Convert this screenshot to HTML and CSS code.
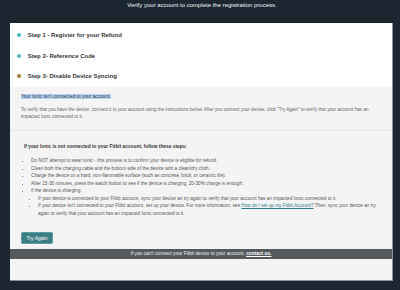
FILE: index.html
```html
<!DOCTYPE html>
<html>
<head>
<meta charset="utf-8">
<link rel="stylesheet" href="styles.css">
</head>
<body>
<div class="page">
  <div class="title">Verify your account to complete the registration process.</div>
  <div class="card">
    <div class="steps">
      <div class="step"><span class="dot teal"></span><span>Step 1 - Register for your Refund</span></div>
      <div class="step"><span class="dot teal"></span><span>Step 2- Reference Code</span></div>
      <div class="step"><span class="dot brown"></span><span>Step 3- Disable Device Syncing</span></div>
    </div>
    <div class="panel">
      <div class="intro">
        <p class="hl"><span>Your Ionic isn't connected to your account.</span></p>
        <p class="desc">To verify that you have the device, connect it to your account using the instructions below. After you connect your device, click "Try Again" to verify that your account has an impacted Ionic connected to it.</p>
      </div>
      <div class="body">
        <p class="head">If your Ionic is not connected to your Fitbit account, follow these steps:</p>
        <ul class="list">
          <li>Do NOT attempt to wear Ionic - this process is to confirm your device is eligible for refund.</li>
          <li>Clean both the charging cable and the bottom side of the device with a clean/dry cloth.</li>
          <li>Charge the device on a hard, non-flammable surface (such as concrete, brick, or ceramic tile).</li>
          <li>After 15-30 minutes, press the watch button to see if the device is charging; 20-30% charge is enough.</li>
          <li>If the device is charging:
            <ul class="sub">
              <li>If your device is connected to your Fitbit account, sync your device an try again to verify that your account has an impacted Ionic connected to it.</li>
              <li>If your device isn't connected to your Fitbit account, set up your device. For more information, see <a href="#">How do I set up my Fitbit Account?</a> Then, sync your device an try again to verify that your account has an impacted Ionic connected to it.</li>
            </ul>
          </li>
        </ul>
        <button class="btn">Try Again</button>
      </div>
      <div class="footer">If you can't connect your Fitbit device to your account, <a href="#">contact us.</a></div>
      <div class="bottom"></div>
    </div>
  </div>
</div>
</body>
</html>
```
FILE: styles.css
```css
html, body {
  margin: 0;
  padding: 0;
  background: #1b2630;
}
body {
  font-family: "Liberation Sans", Arial, sans-serif;
  width: 400px;
  height: 290px;
  overflow: hidden;
}
.page {
  padding: 0 8px 0 10px;
}
.title {
  color: #f2f4f5;
  font-size: 6px;
  text-align: center;
  height: 23px;
  line-height: 10px;
  padding-left: 2px;
}
.card {
  background: #fff;
  width: 382px;
  border-right: 1px solid #8a9196;
  border-bottom: 1px solid #8a9196;
}
.steps {
  padding: 2px 0 0 0;
}
.step {
  display: flex;
  align-items: center;
  height: 20.5px;
  font-size: 6px;
  font-weight: bold;
  color: #333;
}
.dot {
  width: 3.6px;
  height: 3.6px;
  border-radius: 50%;
  margin: 0 7px 0 7.2px;
}
.teal { background: #5ab6c9; }
.brown { background: #a97f4a; }
.panel {
  background: #f4f4f4;
}
.intro {
  padding: 6px 11px 9px 11px;
  border-bottom: 1px solid #e6e6e6;
}
.intro p { margin: 0; }
.hl {
  font-size: 4.8px;
  line-height: 7px;
  color: #333;
}
.hl span {
  background: #b7d4f4;
}
.desc {
  margin-top: 6.5px !important;
  font-size: 4.6px;
  line-height: 7.4px;
  color: #666;
}
.body {
  padding: 12px 11px 5px 11px;
  font-size: 4.7px;
  line-height: 7.6px;
  color: #555;
}
.head {
  margin: 0 0 6.5px 3px;
  font-weight: bold;
  font-size: 4.8px;
  color: #333;
}
.list {
  margin: 0;
  padding-left: 10px;
}
.sub {
  margin: 0;
  padding-left: 7px;
  list-style: disc;
}
a {
  color: #2f7c86;
  text-decoration: underline;
}
.btn {
  margin-top: 14px;
  background: #3e7e86;
  color: #fff;
  border: 1px solid #5d9ba2;
  border-radius: 1.5px;
  font-family: "Liberation Sans", Arial, sans-serif;
  font-size: 5px;
  width: 32px;
  height: 12px;
  padding: 0;
  display: block;
}
.footer {
  background: #53595c;
  color: #f2f2f2;
  font-size: 4.8px;
  text-align: center;
  height: 10px;
  line-height: 10px;
}
.footer a {
  color: #fff;
  font-weight: bold;
}
.bottom {
  height: 21px;
}
```
